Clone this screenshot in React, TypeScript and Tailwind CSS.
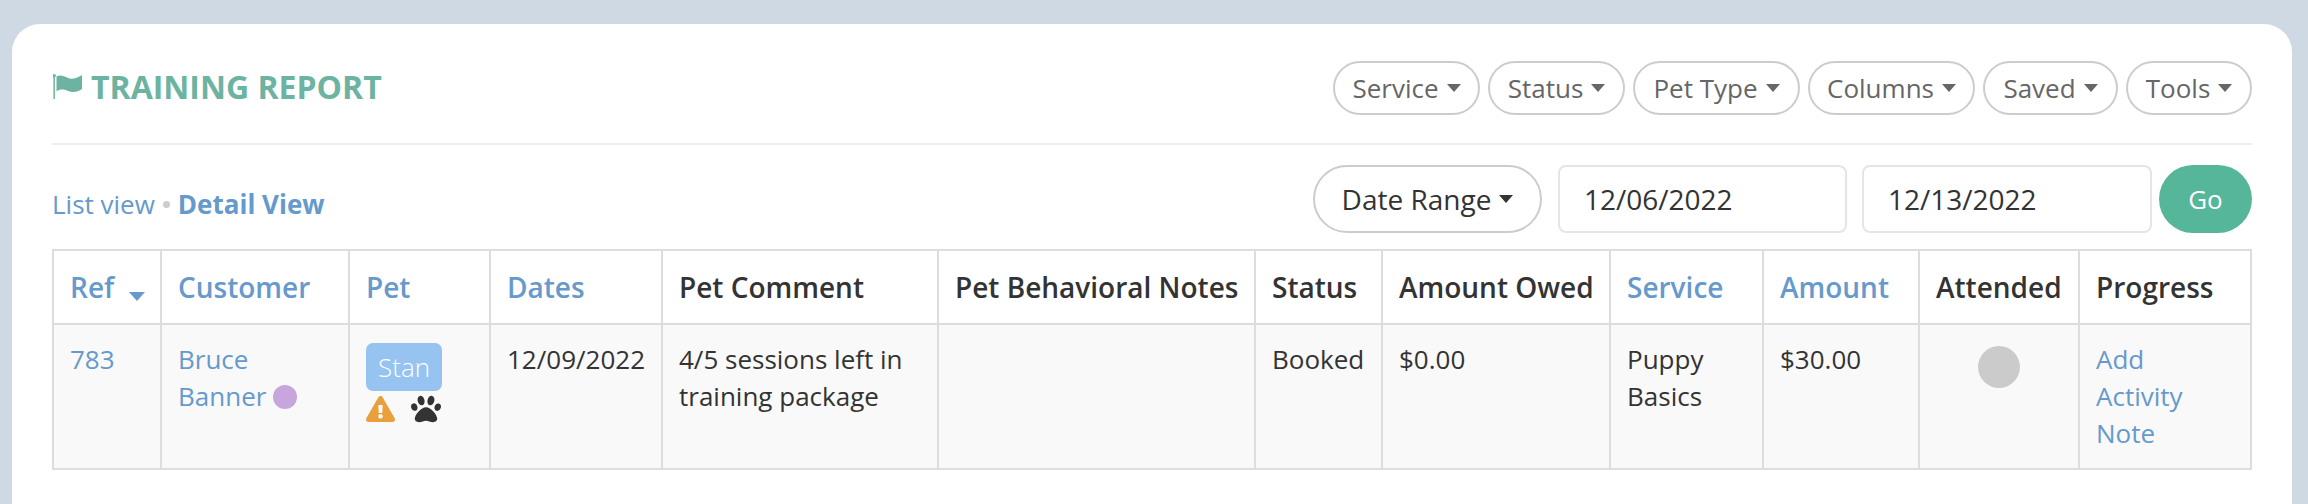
import { FaExclamationTriangle, FaPaw } from "react-icons/fa";

const filters = [
  { label: "Service", width: "w-[147px]" },
  { label: "Status", width: "w-[137px]" },
  { label: "Pet Type", width: "w-[167px]" },
  { label: "Columns", width: "w-[167px]" },
  { label: "Saved", width: "w-[135px]" },
  { label: "Tools", width: "w-[126px]" },
];

const headers = [
  { label: "Ref", link: true },
  { label: "Customer", link: true },
  { label: "Pet", link: true },
  { label: "Dates", link: true },
  { label: "Pet Comment", link: false },
  { label: "Pet Behavioral Notes", link: false },
  { label: "Status", link: false },
  { label: "Amount Owed", link: false },
  { label: "Service", link: true },
  { label: "Amount", link: true },
  { label: "Attended", link: false },
  { label: "Progress", link: false },
];

const colWidths = [
  "w-[108px]",
  "w-[188px]",
  "w-[141px]",
  "w-[172px]",
  "w-[276px]",
  "w-[317px]",
  "w-[127px]",
  "w-[228px]",
  "w-[153px]",
  "w-[156px]",
  "w-[160px]",
  "w-[172px]",
];

const Caret = ({ className }: { className: string }) => (
  <span className={`inline-block border-x-[7px] border-t-[8px] border-x-transparent ${className}`} />
);

const Cell = ({ children }: { children?: React.ReactNode }) => (
  <td className="border-2 border-[#ddd] px-4 pt-[16px] pb-0 align-top">{children}</td>
);

const App = () => {
  return (
    <div className="h-[504px] overflow-hidden bg-[#cfd9e4] pt-6 pl-3 pr-4 font-['Open_Sans',sans-serif] text-[26px] leading-[37px] text-[#333]">
      <div className="h-[480px] rounded-t-[28px] bg-white px-10 pt-[37px]">
        <div className="flex h-[54px] items-center justify-between">
          <h1 className="flex items-center pb-[4px] text-[32px] font-bold text-[#6cb3a2]">
            <svg viewBox="0 0 29 25" className="mr-[9px] ml-[1px] h-[25px] w-[29px]" fill="currentColor">
              <rect x="0.4" y="1" width="1.5" height="24" />
              <circle cx="1.1" cy="1.8" r="1.8" />
              <path d="M3.500 2.500C7 .5 11 2 15 4s9 0 14-3v14c-4 3-9 4-14 2s-8-2-11.500.5z" />
            </svg>
            TRAINING REPORT
          </h1>
          <div className="flex gap-2">
            {filters.map((f) => (
              <button
                key={f.label}
                className={`${f.width} flex h-[54px] items-center justify-center gap-2 rounded-full border-2 border-[#ccc] text-[#666]`}
              >
                {f.label}
                <Caret className="border-t-[#666]" />
              </button>
            ))}
          </div>
        </div>

        <div className="mt-[28px] h-[2px] bg-[#eee]" />

        <div className="mt-[20px] flex h-[68px] items-center justify-between">
          <div className="flex items-center pt-[10px] text-[#6699cc]">
            <span>List view</span>
            <span className="mx-[8px] h-[7px] w-[7px] rounded-full bg-[#ccc]" />
            <span className="font-bold">Detail View</span>
          </div>
          <div className="flex items-center text-[28px]">
            <button className="flex h-[68px] w-[229px] items-center justify-center gap-2 rounded-[34px] border-2 border-[#ccc] text-[#333]">
              Date Range
              <Caret className="border-t-[#333]" />
            </button>
            <div className="ml-[16px] flex h-[68px] w-[289px] items-center rounded-[8px] border-2 border-[#e5e5e5] pl-[24px]">
              12/06/2022
            </div>
            <div className="ml-[15px] flex h-[68px] w-[290px] items-center rounded-[8px] border-2 border-[#e5e5e5] pl-[24px]">
              12/13/2022
            </div>
            <button className="ml-[7px] h-[68px] w-[93px] rounded-[34px] bg-[#55b69a] text-[26px] text-white">Go</button>
          </div>
        </div>

        <table className="mt-[16px] w-[2198px] table-fixed border-collapse">
          <colgroup>
            {colWidths.map((w, i) => (
              <col key={i} className={w} />
            ))}
          </colgroup>
          <thead>
            <tr className="h-[74px]">
              {headers.map((h) => (
                <th
                  key={h.label}
                  className={`whitespace-nowrap border-2 border-[#ddd] px-4 text-left align-middle text-[28px] font-semibold ${h.link ? "text-[#6699cc]" : "text-[#333]"}`}
                >
                  {h.label}
                  {h.label === "Ref" && (
                    <span className="ml-[15px] inline-block border-x-[8px] border-t-[9px] border-x-transparent border-t-[#6699cc] align-[-3px]" />
                  )}
                </th>
              ))}
            </tr>
          </thead>
          <tbody>
            <tr className="h-[145px] bg-[#f9f9f9]">
              <Cell><span className="text-[#6699cc]">783</span></Cell>
              <Cell>
                <span className="text-[#6699cc]">
                  Bruce Banner
                  <span className="ml-[7px] inline-block h-[24px] w-[24px] rounded-full bg-[#c7a6de] align-[-3px]" />
                </span>
              </Cell>
              <td className="border-2 border-[#ddd] px-4 pt-[18px] align-top">
                <span className="flex h-[48px] w-[76px] items-center justify-center rounded-[7px] bg-[#97c3f0] font-light text-white">Stan</span>
                <div className="mt-[3px] flex items-center gap-[16px]">
                  <FaExclamationTriangle className="h-[26px] w-[29px] text-[#e89f3c]" />
                  <FaPaw className="h-[30px] w-[30px] text-[#333]" />
                </div>
              </td>
              <Cell>12/09/2022</Cell>
              <Cell>4/5 sessions left in training package</Cell>
              <Cell />
              <Cell>Booked</Cell>
              <Cell>$0.00</Cell>
              <Cell>Puppy Basics</Cell>
              <Cell>$30.00</Cell>
              <td className="border-2 border-[#ddd] pt-[21px] align-top">
                <div className="mx-auto h-[42px] w-[42px] rounded-full bg-[#cbcbcb]" />
              </td>
              <Cell><span className="text-[#6699cc]">Add Activity Note</span></Cell>
            </tr>
          </tbody>
        </table>
      </div>
    </div>
  );
};

export default App;
